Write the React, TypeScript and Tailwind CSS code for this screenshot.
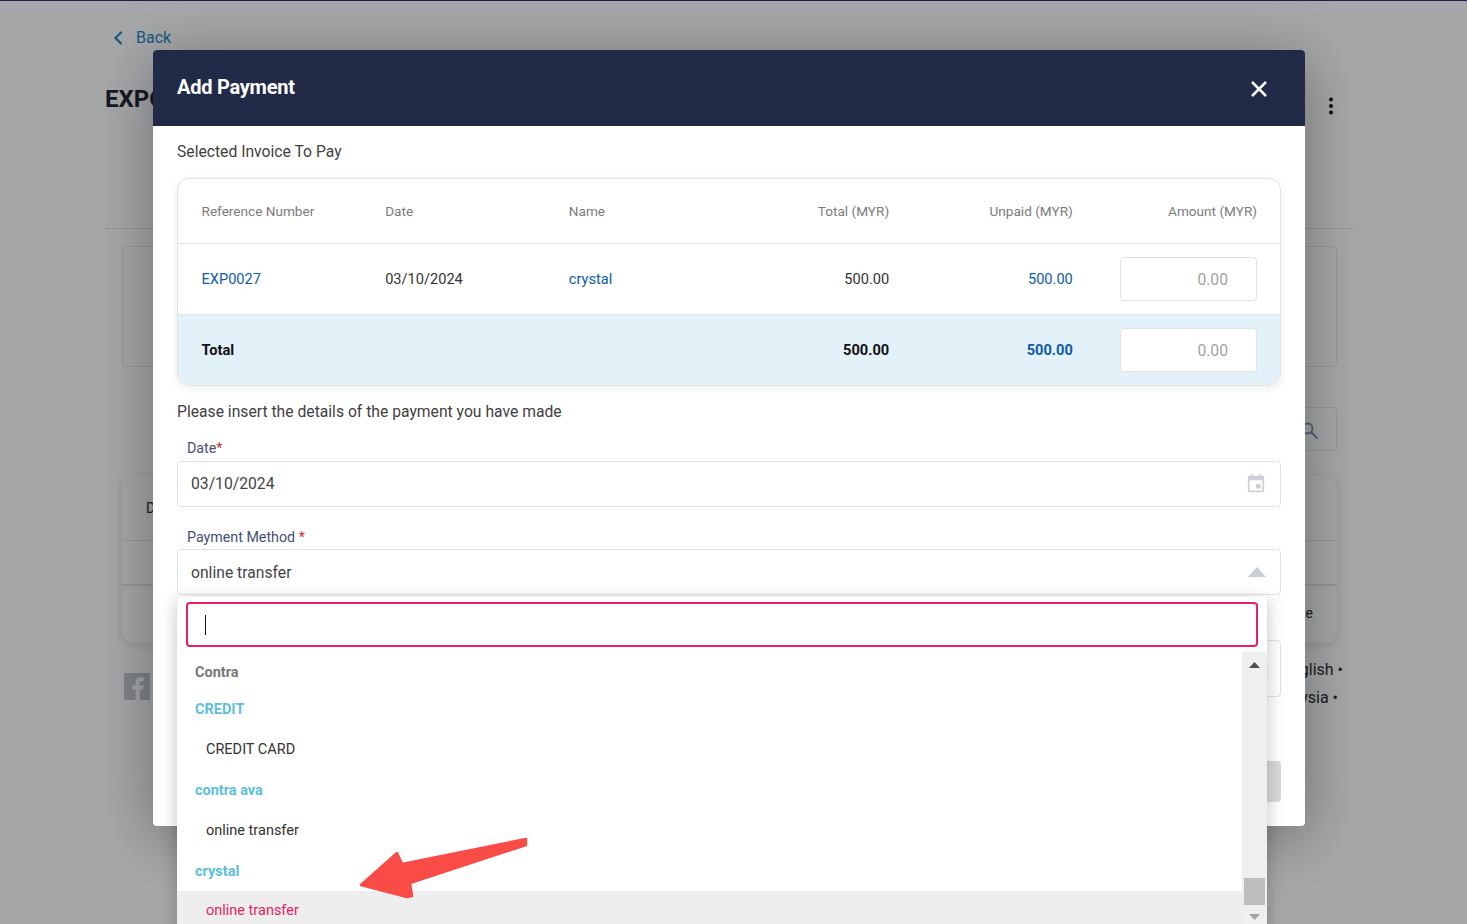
import React from "react";

function Cell({ children, right = false, className = "" }: { children?: React.ReactNode; right?: boolean; className?: string }) {
  return <div className={`flex items-center ${right ? "justify-end pr-[23.5px]" : "pl-[23.5px]"} ${className}`}>{children}</div>;
}

function AmountInput() {
  return (
    <div className="h-11 w-[137px] shrink-0 rounded border border-[#e2e2e2] bg-white flex items-center justify-end pr-7 pt-[1px] text-[15.7px] text-[#a3a3a3]">
      0.00
    </div>
  );
}

function GroupLabel({ children, className = "" }: { children: React.ReactNode; className?: string }) {
  return <div className={`h-[37px] flex items-center pl-[18px] pt-[2px] text-[14.5px] font-bold text-[#5bc0de] ${className}`}>{children}</div>;
}

function Option({ children }: { children: React.ReactNode }) {
  return <div className="h-11 flex items-center pl-[29px] pt-[2px] text-[14.5px] text-[#333333]">{children}</div>;
}

export default function App() {
  return (
    <div className="relative h-[924px] w-full overflow-hidden bg-[#eef0f2] text-[#2c2c2c] font-['Roboto',sans-serif]">
      {/* page behind the dialog */}
      <div className="h-px bg-[#2a2a6e]" />
      <div className="px-[105px] pr-[114px]">
        <div className="mt-[27px] flex items-center h-5 pl-[8px] text-base text-[#2283b3]">
          <svg width="10" height="14" viewBox="0 0 10 14" fill="none" stroke="currentColor" strokeWidth="2.2" strokeLinecap="round" strokeLinejoin="round">
            <path d="M8 1.500 2.500 7 8 12.500" />
          </svg>
          <span className="ml-[13px]">Back</span>
        </div>
        <div className="mt-[35px] flex items-center justify-between h-8 w-[1248px] pr-[19px]">
          <span className="text-2xl font-bold text-[#1f2433]">EXPORT</span>
          <svg className="mt-[14px]" width="6" height="18" viewBox="0 0 6 18" fill="#111"><circle cx="3" cy="2.500" r="2" /><circle cx="3" cy="9" r="2" /><circle cx="3" cy="15.500" r="2" /></svg>
        </div>
        <div className="mt-[113px] h-px w-[1248px] bg-[#d4d6d8]" />
        <div className="ml-[17px] mt-[17px] h-[121px] w-[1215px] rounded border border-[#d6d8da]" />
        <div className="ml-[17px] mt-[40px] flex h-11 w-[1215px] justify-end">
          <div className="flex w-[60px] items-center justify-end rounded-r border border-[#d6d8da] pr-[18px] pt-[2px] text-[#7a8bb0]">
            <svg width="17" height="17" viewBox="0 0 17 17" fill="none" stroke="currentColor" strokeWidth="1.800" strokeLinecap="round">
              <circle cx="6.500" cy="6.500" r="5" /><path d="m10.500 10.500 5.500 5.500" />
            </svg>
          </div>
        </div>
        <div className="ml-[17px] mt-[25px] h-[167px] w-[1215px] rounded-xl bg-[#eef0f2] shadow-[0_2px_10px_rgba(0,0,0,0.12)] flex flex-col text-sm">
          <div className="h-[65px] border-b border-[#d6d8da] flex items-center pl-6">Date</div>
          <div className="h-[45px] border-b-2 border-[#d6d8da]" />
          <div className="flex-1 flex items-center justify-end pr-6 pb-[4px]">Date</div>
        </div>
        <div className="ml-[19px] mt-[30px] flex items-start justify-between w-[1219px]">
          <div className="flex h-[27px] w-[26px] items-end justify-center bg-[#b6bcc4] text-[#eef0f2]">
            <svg width="15" height="24" viewBox="0 0 15 24" fill="currentColor"><path d="M9.700 24V13.600h3.500l.5-4h-4V7c0-1.200.3-1.900 2-1.900h2.100V1.500C13.400 1.400 12.200 1.300 10.800 1.300c-3.100 0-5.200 1.900-5.200 5.300v3H2v4h3.600V24z" /></svg>
          </div>
          <div className="-mt-[17px] text-base leading-7 text-right text-[#2c2c2c]">
            <div>English •</div>
            <div className="pr-[5px]">Malaysia •</div>
          </div>
        </div>
      </div>

      {/* dim layer */}
      <div className="absolute inset-0 bg-black/30" />

      {/* dialog */}
      <div className="absolute left-[153px] top-[50px] h-[776px] w-[1152px] rounded bg-white shadow-[0_10px_60px_rgba(0,0,0,0.35)]">
        <div className="flex h-[76px] items-center justify-between rounded-t bg-[#212b47] pl-6 pr-[38px]">
          <h2 className="-mt-[2px] text-xl font-bold tracking-[-0.25px] text-white">Add Payment</h2>
          <svg className="mt-[2px]" width="16" height="16" viewBox="0 0 16 16" stroke="#ffffff" strokeWidth="2.500" fill="none"><path d="M1 1l14 14M15 1 1 15" /></svg>
        </div>

        <div className="px-6">
          <p className="mt-[14px] h-6 leading-6 text-[15.7px] text-[#3f3f3f]">Selected Invoice To Pay</p>

          <div className="mt-[14px] h-[208px] overflow-hidden rounded-xl border border-[#e3e3e3] shadow-[0_2px_10px_rgba(0,0,0,0.08)]">
            <div className="grid h-[65px] grid-cols-6 border-b border-[#e3e3e3] text-[13.6px] text-[#7b7b7b]">
              <Cell>Reference Number</Cell>
              <Cell>Date</Cell>
              <Cell>Name</Cell>
              <Cell right>Total (MYR)</Cell>
              <Cell right>Unpaid (MYR)</Cell>
              <Cell right className="pr-[23px]">Amount (MYR)</Cell>
            </div>
            <div className="grid h-[71px] grid-cols-6 border-b border-[#e3e3e3] text-[14.6px] text-[#333333]">
              <Cell className="pt-[2px] text-[#0d5bab]">EXP0027</Cell>
              <Cell className="pt-[2px]">03/10/2024</Cell>
              <Cell className="pt-[2px] text-[#0d5bab]">crystal</Cell>
              <Cell right className="pt-[2px]">500.00</Cell>
              <Cell right className="pt-[2px] text-[#0d5bab]">500.00</Cell>
              <Cell right className="pr-[23px]"><AmountInput /></Cell>
            </div>
            <div className="grid h-[70px] grid-cols-6 bg-[#e3f1f8] text-[14.6px] font-bold text-[#111111]">
              <Cell className="pt-[2px]">Total</Cell>
              <Cell />
              <Cell />
              <Cell right className="pt-[2px]">500.00</Cell>
              <Cell right className="pt-[2px] text-[#0d5bab]">500.00</Cell>
              <Cell right className="pr-[23px] font-normal"><AmountInput /></Cell>
            </div>
          </div>

          <p className="mt-[14px] h-6 leading-6 text-[15.7px] text-[#3f3f3f]">Please insert the details of the payment you have made</p>

          <div className="mt-[14px] h-5 pl-[10px] text-[14.25px] leading-5 text-[#435078]">
            Date<span className="text-[#d32f2f]">*</span>
          </div>
          <div className="mt-[3px] flex h-[46px] items-center justify-between rounded border border-[#e2e2e2] pl-[13px] pr-[13px] text-[15.7px] text-[#444444]">
            <span>03/10/2024</span>
            <svg width="22" height="22" viewBox="0 0 24 24" fill="#cdd1d8"><path d="M17 12h-5v5h5v-5zM16 1v2H8V1H6v2H5c-1.110 0-1.990.9-1.990 2L3 19c0 1.100.89 2 2 2h14c1.100 0 2-.9 2-2V5c0-1.100-.9-2-2-2h-1V1h-2zm3 18H5V8h14v11z" /></svg>
          </div>

          <div className="relative">
            <div className="mt-[20px] h-5 pl-[10px] text-[14.25px] leading-5 text-[#435078]">
              Payment Method <span className="text-[#d32f2f]">*</span>
            </div>
            <div className="mt-[2px] flex h-[46px] items-center justify-between rounded border border-[#e2e2e2] pl-[13px] pr-[14px] text-[15.7px] text-[#444444]">
              <span className="mt-[1px]">online transfer</span>
              <svg width="18" height="10" viewBox="0 0 18 10" fill="#c9ced6"><path d="M9 0l9 10H0z" /></svg>
            </div>

            {/* dropdown */}
            <div className="absolute left-0 top-[70px] z-10 h-[340px] w-[1090px] bg-white shadow-[0_4px_16px_rgba(0,0,0,0.25)]">
              <div className="px-[9px] pt-[5px]">
                <div className="flex h-[45px] items-center rounded border-2 border-[#e91e63] pl-[17px]">
                  <div className="h-5 w-px bg-[#111111]" />
                </div>
              </div>
              <div className="mt-[5px] flex h-[285px]">
                <div className="flex-1">
                  <div className="flex h-10 items-center pl-[18px] pt-[2px] text-[14.5px] font-bold text-[#777777]">Contra</div>
                  <GroupLabel className="-mt-[2px]">CREDIT</GroupLabel>
                  <Option>CREDIT CARD</Option>
                  <GroupLabel>contra ava</GroupLabel>
                  <Option>online transfer</Option>
                  <GroupLabel>crystal</GroupLabel>
                  <div className="mt-[2px] h-[33px] bg-[#eeeeee] pl-[29px] pt-[10px] text-[14.5px] leading-[20px] text-[#e91e63]">online transfer</div>
                </div>
                <div className="flex w-[25px] flex-col items-center bg-[#efefef] pt-[10px]">
                  <svg width="11" height="6" viewBox="0 0 11 6" fill="#505050"><path d="M5.500 0 11 6H0z" /></svg>
                  <div className="mt-[210px] h-[27px] w-[21px] bg-[#bebebe]" />
                  <svg className="mt-[9px]" width="11" height="6" viewBox="0 0 11 6" fill="#a3a3a3"><path d="M5.500 6 11 0H0z" /></svg>
                </div>
              </div>
            </div>
          </div>

          {/* field hidden under the dropdown */}
          <div className="mt-[45px] flex h-[57px] items-center justify-end rounded border border-[#e2e2e2] pr-[12px] text-base text-[#555555]">:</div>
          <div className="mt-[64px] h-[41px] rounded bg-[#d9d9d9]" />
        </div>
      </div>

      {/* annotation arrow */}
      <svg className="absolute left-[355px] top-[833px] z-20" width="178" height="70" viewBox="355 833 178 70" fill="#f94c47" stroke="#f94c47" strokeWidth="2.500" strokeLinejoin="round">
        <path d="M361 885 397 853 402 864 526 839 526 845 410 883 412 896 407 897z" />
      </svg>
    </div>
  );
}
